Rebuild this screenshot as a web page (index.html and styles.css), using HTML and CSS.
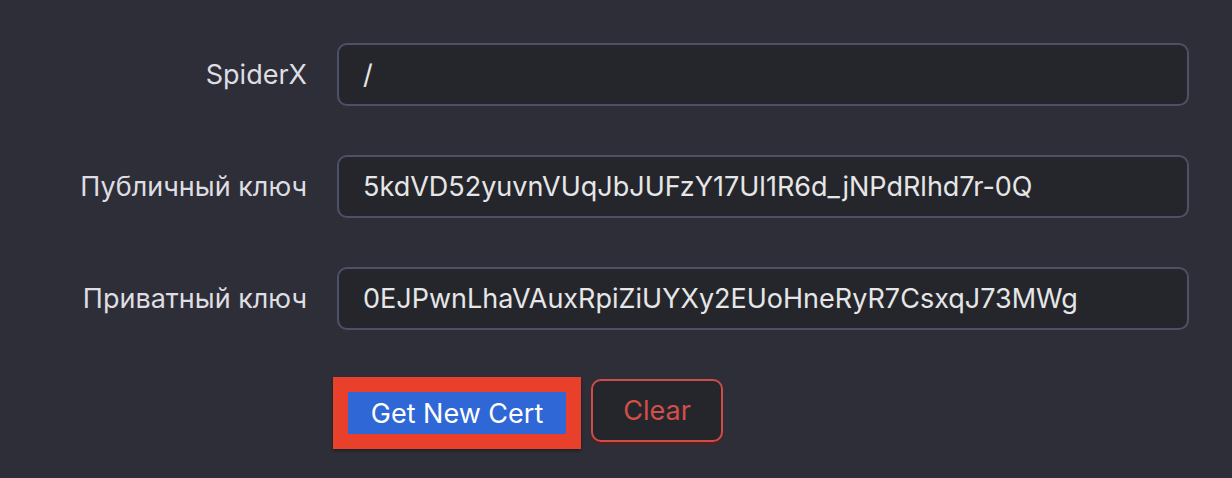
FILE: index.html
```html
<!DOCTYPE html>
<html lang="ru">
<head>
<meta charset="utf-8">
<title>Reality</title>
<link rel="stylesheet" href="styles.css">
</head>
<body>
<form class="form">
  <label class="label" for="spx">SpiderX</label>
  <input class="field" id="spx" type="text" value="/">

  <label class="label" for="pub">Публичный ключ</label>
  <input class="field" id="pub" type="text" value="5kdVD52yuvnVUqJbJUFzY17Ul1R6d_jNPdRlhd7r-0Q">

  <label class="label" for="priv">Приватный ключ</label>
  <input class="field" id="priv" type="text" value="0EJPwnLhaVAuxRpiZiUYXy2EUoHneRyR7CsxqJ73MWg">

  <div class="actions">
    <span class="highlight"><button type="button" class="btn btn-primary">Get New Cert</button></span>
    <button type="button" class="btn btn-danger">Clear</button>
  </div>
</form>
</body>
</html>
```

FILE: styles.css
```css
html, body {
  margin: 0;
  background: #2e2e38;
  height: 100%;
}
body {
  font-family: Inter, "Noto Sans", sans-serif;
  color: #e3e3e6;
}
.form {
  display: grid;
  grid-template-columns: 337px 852px;
  row-gap: 49px;
  padding-top: 43px;
  align-items: center;
}
.label {
  text-align: right;
  padding-right: 30px;
  font-size: 27px;
  color: #dedee2;
}
.field {
  box-sizing: border-box;
  height: 63px;
  width: 852px;
  margin: 0;
  padding: 0 24px;
  background: #25262b;
  border: 2px solid #4c5168;
  border-radius: 10px;
  color: #e6e6e8;
  font-family: Inter, "Noto Sans", sans-serif;
  font-size: 27px;
  outline: none;
}
.actions {
  grid-column: 2;
  display: flex;
  align-items: flex-start;
  gap: 10px;
  margin-left: -4px;
  margin-top: -2px;
}
.highlight {
  display: block;
  border: 15px solid #e8402a;
  box-shadow: 0 2px 3px rgba(0,0,0,0.35);
}
.btn {
  font-family: Inter, "Noto Sans", sans-serif;
  font-size: 27px;
  margin: 0;
  cursor: pointer;
}
.btn-primary {
  display: block;
  width: 218px;
  height: 42px;
  background: #3067d6;
  border: none;
  color: #ffffff;
  padding: 0;
}
.btn-danger {
  margin-top: 2px;
  width: 132px;
  height: 63px;
  background: #25262b;
  border: 2px solid #cf4d49;
  border-radius: 10px;
  color: #d24f4a;
  box-shadow: 0 3px 0 #4d2224;
}
```
